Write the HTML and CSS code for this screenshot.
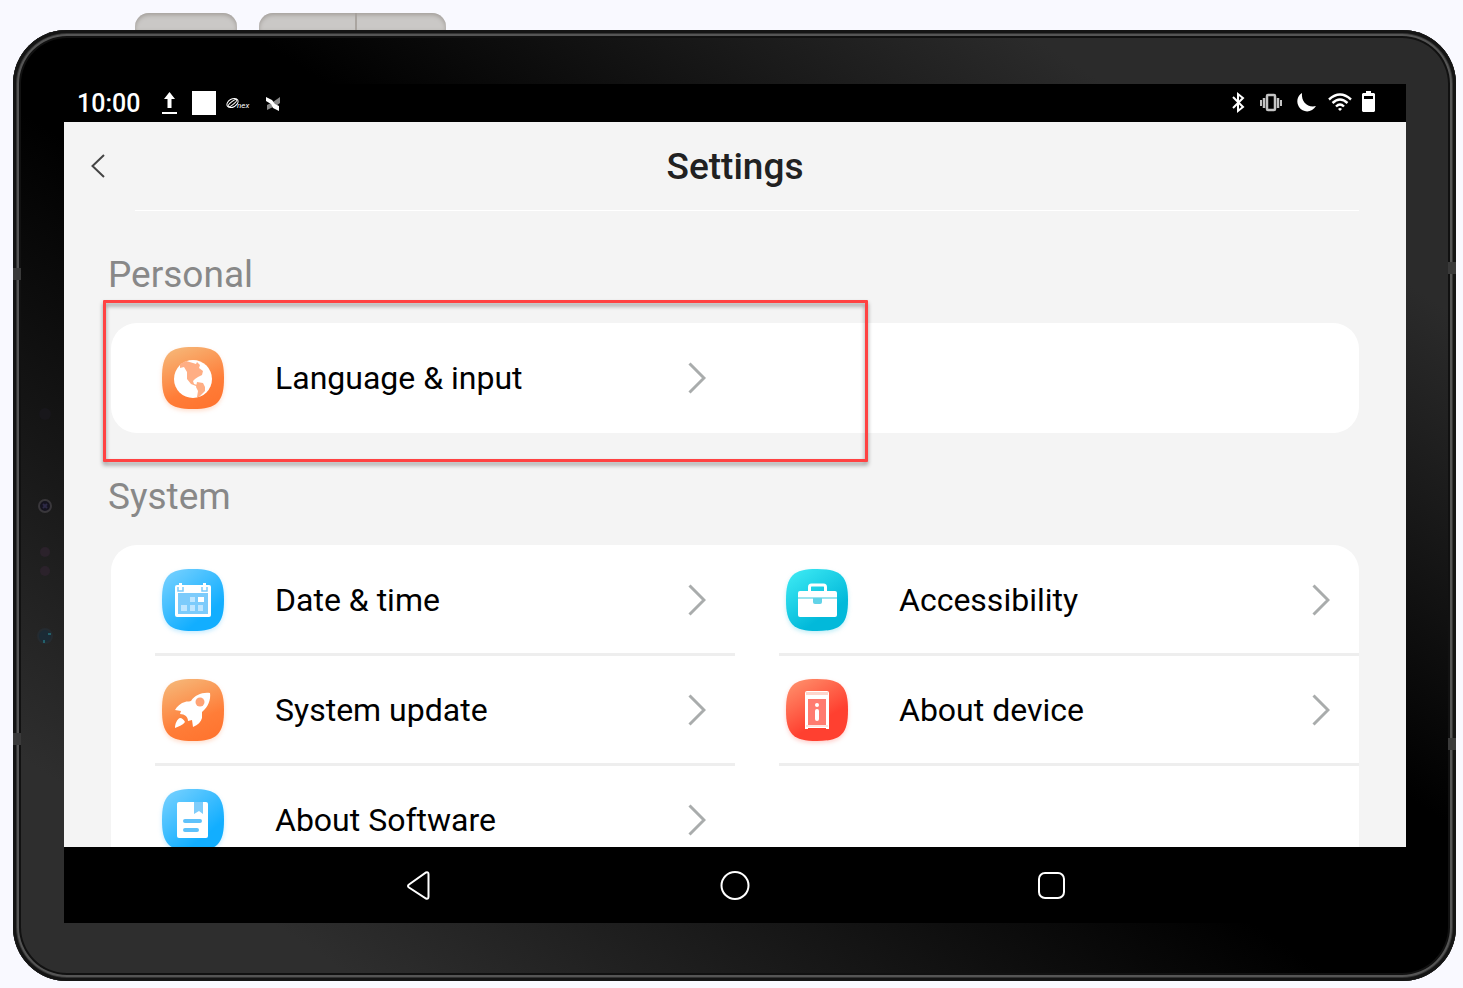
FILE: index.html
```html
<!DOCTYPE html>
<html lang="en">
<head>
  <meta charset="UTF-8" />
  <meta name="viewport" content="width=device-width, initial-scale=1.0" />
  <title>Settings</title>
  <link rel="stylesheet" href="styles.css">
</head>
<body>
  <div class="keys">
    <div class="key"></div>
    <div class="key key-volume"></div>
  </div>

  <div class="device">
    <span class="band band-left-top"></span>
    <span class="band band-left-bottom"></span>
    <span class="band band-right-top"></span>
    <span class="band band-right-bottom"></span>
    <svg class="sensors" width="20" height="250" viewBox="0 0 20 250" aria-hidden="true">
      <circle cx="10" cy="20" r="6" fill="#18171b"/>
      <circle cx="10" cy="112" r="6" fill="#15131f" stroke="#39373b" stroke-width="2"/>
      <path d="M8 110l4 4M12 110l-4 4" stroke="#2d2946" stroke-width="2"/>
      <circle cx="10" cy="158" r="5" fill="#2b222b"/>
      <circle cx="10" cy="177" r="5" fill="#2b222b"/>
      <circle cx="10" cy="242" r="7" fill="#1b2a35" stroke="#252b30" stroke-width="2"/>
      <path d="M13 240h3M9 246v3" stroke="#23606a" stroke-width="2"/>
    </svg>

    <div class="screen">
      <div class="statusbar">
        <div class="status-left">
          <span class="time">10:00</span>
          <svg width="26" height="24" viewBox="0 0 26 24" fill="#fff" aria-hidden="true">
            <path d="M13.500 1L19 8h-3.500v9h-4V8H8zM6 21h15v2H6z"/>
          </svg>
          <span class="notice"></span>
          <svg width="25" height="24" viewBox="0 0 25 24" aria-hidden="true">
            <g fill="none" stroke="#fff">
              <ellipse cx="6.500" cy="12" rx="6" ry="4" transform="rotate(-30 6.500 12)"/>
              <ellipse cx="6.500" cy="12" rx="5.500" ry="1.500" transform="rotate(-40 6.500 12)"/>
            </g>
            <text x="11" y="17" class="brand">nex</text>
          </svg>
          <svg width="24" height="24" viewBox="0 0 24 24" aria-hidden="true">
            <path d="M19 6v6l-4 3-3-4zM6 19v-5l4-2 2 4z" fill="#888"/>
            <path d="M5 6l6 3 3 4 4 2v5l-6-3-2-4-5-3z" fill="#fff"/>
          </svg>
        </div>
        <div class="status-right">
          <svg width="16" height="24" viewBox="0 0 16 24" fill="none" stroke="#fff" stroke-width="2" aria-hidden="true">
            <path d="M3 6l10 10-5 4V3l5 4L3 17"/>
          </svg>
          <svg width="30" height="24" viewBox="0 0 30 24" fill="none" stroke="#c4c4c4" aria-hidden="true">
            <rect x="11" y="4" width="8" height="15" rx="1" stroke-width="2.500"/>
            <path d="M8 7v10M22 7v10" stroke-width="2.500"/>
            <path d="M5 9v6M25 9v6" stroke-width="2"/>
          </svg>
          <svg width="22" height="24" viewBox="0 0 22 24" fill="#fff" aria-hidden="true">
            <path d="M6 2C1 5 0 11 3 16c4 6 13 6 17-1-8 2-15-4-14-13z"/>
          </svg>
          <svg width="24" height="24" viewBox="0 0 24 24" fill="none" stroke="#fff" stroke-width="2.400" aria-hidden="true">
            <path d="M1 8.500q11-10 22 0M4.500 12q7.500-7 15 0M8 15.500q4-4 8 0"/>
            <path d="M12 20l-2-2q2-2 4 0z" fill="#fff" stroke="none"/>
          </svg>
          <svg width="13" height="24" viewBox="0 0 13 24" aria-hidden="true">
            <path d="M4 0h5v2h3l1 1v17l-1 1H1l-1-1V3l1-1h3z" fill="#fff"/>
            <path d="M2 5h9v3H2z" fill="#000"/>
          </svg>
        </div>
      </div>

      <main class="app">
        <header class="app-header">
          <button class="back" type="button" aria-label="Back">
            <svg width="14" height="24" viewBox="0 0 14 24" fill="none" stroke="#444" stroke-width="2"><path d="M13 1L1.500 12 13 23"/></svg>
          </button>
          <h1>Settings</h1>
        </header>

        <h2>Personal</h2>
        <div class="card">
          <a class="row" href="#language">
            <svg class="icon icon-orange" viewBox="0 0 62 62" aria-hidden="true">
              <defs>
                <linearGradient id="orange" x1="0.200" y1="0" x2="0.600" y2="1"><stop offset="0" stop-color="#f6b677"/><stop offset="0.700" stop-color="#ff7d38"/><stop offset="1" stop-color="#ff7530"/></linearGradient>
                <linearGradient id="blue" x1="0" y1="0" x2="0.800" y2="1"><stop offset="0" stop-color="#7dd3ff"/><stop offset="0.800" stop-color="#12aeff"/></linearGradient>
                <linearGradient id="cyan" x1="0" y1="0" x2="0.700" y2="1"><stop offset="0" stop-color="#41edf5"/><stop offset="0.800" stop-color="#02b9da"/></linearGradient>
                <linearGradient id="red" x1="0" y1="0" x2="0.600" y2="1"><stop offset="0" stop-color="#ff9670"/><stop offset="0.750" stop-color="#ff4030"/></linearGradient>
              </defs>
              <path d="M31 0C55 0 62 7 62 31S55 62 31 62 0 55 0 31 7 0 31 0z" fill="url(#orange)"/>
              <circle cx="31" cy="32" r="19" fill="#fff"/>
              <path d="M18 17l6-3 7 2 3 1 1-2 3 3-1 3 4 3-1 4-4 2-3 2-2 2 1 3 3 1-1 1-5-2-4-5v-7l-3-5-4 1zM35 35l6 1 2 4v4l-6 6h-2l1-6-2-4z" fill="#ffae84"/>
            </svg>
            <span>Language &amp; input</span>
            <svg class="chevron" viewBox="0 0 18 32" aria-hidden="true"><path d="M1.500 1.500L16 16 1.500 30.500"/></svg>
          </a>
          <div class="highlight"></div>
        </div>

        <h2>System</h2>
        <ul class="card">
          <li class="divided">
            <a class="row" href="#date">
              <svg class="icon icon-blue" viewBox="0 0 62 62" aria-hidden="true">
                <path d="M31 0C55 0 62 7 62 31S55 62 31 62 0 55 0 31 7 0 31 0z" fill="url(#blue)"/>
                <rect x="13" y="16" width="36" height="32" rx="2" fill="#fff"/>
                <path d="M16 24h30v21H16z" fill="#7ccbfb"/>
                <path d="M16 18v4h5v-4M40 18v4h5v-4" fill="none" stroke="#7ccbfb" stroke-width="1.500"/>
                <path d="M17 14h3v6h-3zM41 14h3v6h-3z" fill="#fff"/>
                <path d="M28 28h5v5h-5zM19 36h6v6h-6zM28 36h5v6h-5zM36 36h5v6h-5z" fill="#bfe6ff"/>
                <path d="M36 28h6v5h-6z" fill="#fff"/>
              </svg>
              <span>Date &amp; time</span>
              <svg class="chevron" viewBox="0 0 18 32" aria-hidden="true"><path d="M1.500 1.500L16 16 1.500 30.500"/></svg>
            </a>
          </li>
          <li class="divided">
            <a class="row" href="#accessibility">
              <svg class="icon icon-cyan" viewBox="0 0 62 62" aria-hidden="true">
                <path d="M31 0C55 0 62 7 62 31S55 62 31 62 0 55 0 31 7 0 31 0z" fill="url(#cyan)"/>
                <path d="M23.500 23v-5q0-2 2-2h12q2 0 2 2v5" fill="none" stroke="#fff" stroke-width="3"/>
                <rect x="12" y="22" width="39" height="26" rx="2" fill="#fff"/>
                <path d="M12 28h39v2H12z" fill="#9be3ee"/>
                <path d="M27 29h9v4q0 2-2 2h-5q-2 0-2-2z" fill="#61d3e8"/>
              </svg>
              <span>Accessibility</span>
              <svg class="chevron" viewBox="0 0 18 32" aria-hidden="true"><path d="M1.500 1.500L16 16 1.500 30.500"/></svg>
            </a>
          </li>
          <li class="divided">
            <a class="row" href="#update">
              <svg class="icon icon-orange" viewBox="0 0 62 62" aria-hidden="true">
                <path d="M31 0C55 0 62 7 62 31S55 62 31 62 0 55 0 31 7 0 31 0z" fill="url(#orange)"/>
                <path d="M48 14c-8-1-15 2-19 8-3 1-4 0-6 1-4 1-8 4-10 8l6 1-1 3c5 0 8 3 8 7l4-1 1 7c5-2 8-5 9-9v-6c6-5 9-12 8-19z" fill="#fff"/>
                <circle cx="38" cy="23" r="4.500" fill="#ffa375"/>
                <path d="M18 39c2 0 4 2 5 4-2 3-6 4-10 6 0-4 2-9 5-10z" fill="#fff"/>
              </svg>
              <span>System update</span>
              <svg class="chevron" viewBox="0 0 18 32" aria-hidden="true"><path d="M1.500 1.500L16 16 1.500 30.500"/></svg>
            </a>
          </li>
          <li class="divided">
            <a class="row" href="#device">
              <svg class="icon icon-red" viewBox="0 0 62 62" aria-hidden="true">
                <path d="M31 0C55 0 62 7 62 31S55 62 31 62 0 55 0 31 7 0 31 0z" fill="url(#red)"/>
                <path d="M19 14q0-2 2-2h20q2 0 2 2v36h-3v-1H22v1h-3z" fill="#fff"/>
                <path d="M20 13h22v3H20z" fill="#ffd5cc"/>
                <path d="M22 20h18v26H22z" fill="#ff7b70"/>
                <path d="M20 47h22" stroke="#ffc4bc"/>
                <circle cx="31" cy="26" r="2" fill="#fff"/>
                <rect x="29" y="30" width="4" height="12" rx="2" fill="#fff"/>
              </svg>
              <span>About device</span>
              <svg class="chevron" viewBox="0 0 18 32" aria-hidden="true"><path d="M1.500 1.500L16 16 1.500 30.500"/></svg>
            </a>
          </li>
          <li>
            <a class="row" href="#software">
              <svg class="icon icon-blue" viewBox="0 0 62 62" aria-hidden="true">
                <path d="M31 0C55 0 62 7 62 31S55 62 31 62 0 55 0 31 7 0 31 0z" fill="url(#blue)"/>
                <rect x="15" y="13" width="31" height="36" rx="2" fill="#fff"/>
                <path d="M32 13h9v12l-4-3-5 3z" fill="#7fcdfb"/>
                <path d="M23 32h15M23 41h12" stroke="#5fc2fb" stroke-width="4" stroke-linecap="round"/>
              </svg>
              <span>About Software</span>
              <svg class="chevron" viewBox="0 0 18 32" aria-hidden="true"><path d="M1.500 1.500L16 16 1.500 30.500"/></svg>
            </a>
          </li>
        </ul>
      </main>

      <nav class="navbar">
        <button type="button" aria-label="Back">
          <svg width="32" height="32" viewBox="0 0 32 32"><path d="M22 3.500q2.500-1 2.500 2v22q0 3-2.500 2L5 18.500q-2-1.500 0-3z"/></svg>
        </button>
        <button type="button" aria-label="Home">
          <svg width="32" height="32" viewBox="0 0 32 32"><circle cx="16" cy="16.500" r="13.500"/></svg>
        </button>
        <button type="button" aria-label="Recent apps">
          <svg width="32" height="32" viewBox="0 0 32 32"><rect x="4" y="4" width="25" height="25" rx="6"/></svg>
        </button>
      </nav>
    </div>
  </div>
</body>
</html>
```
FILE: styles.css
```css
* {
  box-sizing: border-box;
}
body {
  display: flex;
  flex-direction: column;
  height: 100vh;
  margin: 0;
  padding: 13px 7px 7px 13px;
  background: #f9f9ff;
  color: #000;
  font-family: Roboto, 'Liberation Sans', sans-serif;
}
h1, h2, ul {
  margin: 0;
  padding: 0;
  font-weight: normal;
}
ul {
  list-style: none;
}
button {
  padding: 0;
  border: 0;
  background: none;
  cursor: pointer;
}
svg {
  display: block;
  flex-shrink: 0;
}

/* tablet body */
.keys {
  display: flex;
  flex-shrink: 0;
  gap: 22px;
  height: 17px;
  padding-left: 122px;
}
.key {
  width: 102px;
  border-radius: 14px 14px 0 0;
  background: #cac8c6;
  box-shadow: inset 0 2px 4px #a39e9a;
}
.key-volume {
  width: 187px;
  background: linear-gradient(to right, #cac8c6 96px, #aaa5a0 96px, #aaa5a0 98px, #cac8c6 98px);
}
.device {
  position: relative;
  display: flex;
  flex: 1;
  min-height: 0;
  padding: 54px 50px 58px 51px;
  border-radius: 54px;
  background: linear-gradient(to top right, #2e2e2e 12%, #000 46%, #000 58%, #2b2b2b 85%);
  box-shadow: inset 0 0 0 3px #141414, inset 0 0 0 4px #333, inset 0 0 0 6px #555, inset 0 0 0 8px #111;
}
.band {
  position: absolute;
  width: 8px;
  height: 12px;
  background: #3a3a3a;
}
.band-left-top {
  top: 238px;
  left: 0;
}
.band-left-bottom {
  top: 703px;
  left: 0;
}
.band-right-top {
  top: 232px;
  right: 0;
}
.band-right-bottom {
  top: 708px;
  right: 0;
}
.sensors {
  position: absolute;
  top: 364px;
  left: 22px;
}
.screen {
  display: flex;
  flex: 1;
  flex-direction: column;
  min-width: 0;
  background: #000;
}

/* status bar */
.statusbar {
  display: flex;
  flex-shrink: 0;
  justify-content: space-between;
  height: 38px;
  padding: 0 31px 0 13px;
}
.status-left,
.status-right {
  display: flex;
  align-items: center;
  gap: 10px;
}
.time {
  margin-right: 6px;
  color: #fff;
  font-size: 25px;
  font-weight: 500;
}
.notice {
  width: 24px;
  height: 24px;
  background: #fff;
}
.brand {
  fill: #fff;
  font-size: 8px;
  font-style: italic;
}

/* settings app */
.app {
  flex: 1;
  min-height: 0;
  overflow-y: auto;
  scrollbar-width: none;
  padding: 0 47px;
  background: #f4f4f4;
}
.app-header {
  position: relative;
  display: flex;
  align-items: center;
  justify-content: center;
  height: 89px;
  border-bottom: 1px solid transparent;
}
.app-header::after {
  content: '';
  position: absolute;
  right: 0;
  bottom: -1px;
  left: 24px;
  height: 1px;
  background: #fff;
}
.back {
  position: absolute;
  left: -20px;
}
h1 {
  color: #212121;
  font-size: 37px;
  font-weight: 500;
}
h2 {
  height: 112px;
  margin-left: -3px;
  padding-top: 42px;
  color: #888;
  font-size: 37px;
  line-height: 44px;
}
.card {
  position: relative;
  display: grid;
  grid-template-columns: 1fr 1fr;
  border-radius: 26px;
  background: #fff;
}
.row {
  display: flex;
  align-items: center;
  height: 110px;
  padding: 0 29px 0 51px;
  color: #000;
  font-size: 32px;
  text-decoration: none;
}
.row span {
  flex: 1;
  margin-left: 51px;
}
.divided {
  position: relative;
}
.divided::after {
  content: '';
  position: absolute;
  right: 0;
  bottom: -1px;
  left: 44px;
  height: 3px;
  background: #eee;
}
.icon {
  width: 62px;
  height: 62px;
}
.icon-orange {
  filter: drop-shadow(0 2px 2px rgba(255, 125, 56, 0.25));
}
.icon-blue {
  filter: drop-shadow(0 2px 2px rgba(18, 174, 255, 0.25));
}
.icon-cyan {
  filter: drop-shadow(0 2px 2px rgba(2, 185, 218, 0.25));
}
.icon-red {
  filter: drop-shadow(0 2px 2px rgba(255, 64, 48, 0.25));
}
.chevron {
  width: 18px;
  height: 32px;
  fill: none;
  stroke: #a9acac;
  stroke-width: 3px;
}
.highlight {
  position: absolute;
  top: -23px;
  right: calc(50% - 133px);
  bottom: -29px;
  left: -8px;
  border: 3px solid #ff4242;
  border-radius: 1px;
  filter: drop-shadow(0 3px 2px rgba(0, 0, 0, 0.4));
  pointer-events: none;
}

/* navigation bar */
.navbar {
  display: flex;
  flex-shrink: 0;
  align-items: center;
  justify-content: space-between;
  height: 76px;
  padding: 0 25%;
}
.navbar button {
  display: flex;
  justify-content: center;
  width: 40px;
}
.navbar svg {
  fill: none;
  stroke: #fff;
  stroke-width: 2px;
}
```
